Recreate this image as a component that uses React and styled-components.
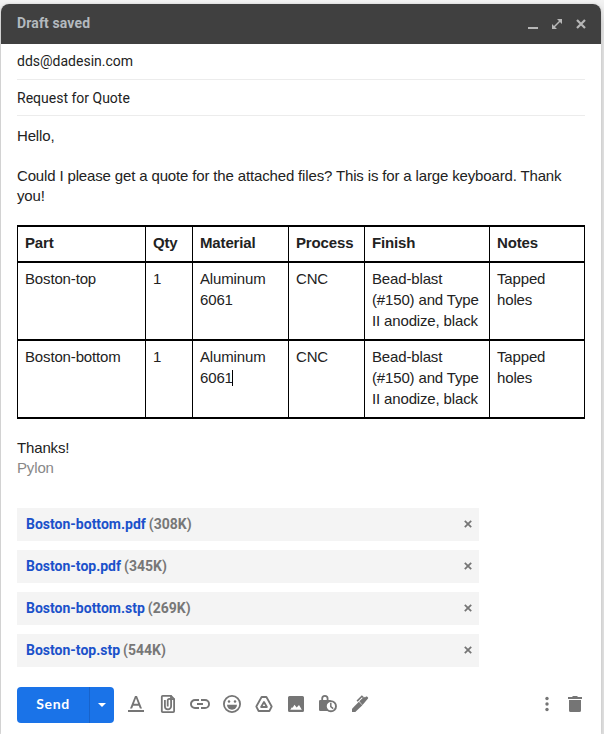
import React from "react";
import styled, { createGlobalStyle } from "styled-components";

const GlobalStyle = createGlobalStyle`
  * { box-sizing: border-box; }
  html, body { margin: 0; padding: 0; }
  body { background: #dedede; overflow: hidden; }
`;

const Backdrop = styled.div`
  width: 604px;
  height: 734px;
  padding: 4px 3px 0 1px;
  background: linear-gradient(#f3f3f3 0, #efefef 5px, #dedede 24px);
`;

const ComposeWindow = styled.main`
  display: flex;
  flex-direction: column;
  height: 730px;
  overflow: hidden;
  background: #fff;
  border-radius: 8px 8px 0 0;
  box-shadow: 0 0 3px rgba(0, 0, 0, 0.15);
  color: #222;
  font-family: Roboto, "Liberation Sans", sans-serif;
  font-size: 14px;
`;

const TitleBar = styled.header`
  display: flex;
  align-items: center;
  flex: 0 0 40px;
  padding: 0 14px 0 16px;
  background: #404040;
  color: #b3b9be;
  font-weight: 700;
  line-height: 20px;
`;

const Title = styled.span`
  flex: 1;
  padding-bottom: 2px;
  letter-spacing: 0.13px;
`;

const WindowControls = styled.div`
  display: flex;
  gap: 12px;
`;

const IconButton = styled.button`
  display: flex;
  align-items: center;
  justify-content: center;
  flex: none;
  width: ${(p) => p.$size}px;
  height: ${(p) => p.$size}px;
  padding: 0;
  border: 0;
  background: none;
  color: ${(p) => p.$color || "#757575"};
`;

const Field = styled.div`
  display: flex;
  align-items: center;
  flex: 0 0 36px;
  margin: 0 16px;
  padding-bottom: ${(p) => p.$lift || 0}px;
  border-bottom: 1px solid #ececec;
`;

const Message = styled.section`
  display: flex;
  flex-direction: column;
  flex: 0 0 392px;
  padding: 10px 16px 0;
  font: 15px/20px "Liberation Sans", Arial, sans-serif;
  letter-spacing: -0.15px;
`;

const Paragraph = styled.p`
  margin: 0 0 20px;
`;

const Signature = styled.span`
  color: #888;
`;

const PartsTable = styled.table`
  width: 568px;
  margin: -1px 0 19px;
  border: solid #000;
  border-width: 2px 0 0 1px;
  border-spacing: 0;
  table-layout: fixed;
  line-height: 21px;
  text-align: left;
`;

const Column = styled.col`
  width: ${(p) => p.$width}px;
`;

const HeadCell = styled.th`
  height: 36px;
  padding: 5px 6px 8px 7px;
  border: solid #000;
  border-width: 0 1px 2px 0;
  font-weight: 700;
  vertical-align: top;
`;

const Cell = styled.td`
  height: 78px;
  padding: 5px 6px 8px 7px;
  border: solid #000;
  border-width: 0 1px 2px 0;
  vertical-align: top;
`;

const Caret = styled.span`
  display: inline-block;
  width: 1px;
  height: 16px;
  margin-left: -1px;
  background: #000;
  vertical-align: -3px;
`;

const Attachments = styled.ul`
  display: flex;
  flex-direction: column;
  gap: 9px;
  width: 462px;
  margin: 0 0 0 16px;
  padding: 0;
  list-style: none;
`;

const Attachment = styled.li`
  display: flex;
  align-items: center;
  height: 33px;
  padding: 0 4px 1px 9px;
  background: #f4f4f4;
  color: #777;
  font-weight: 700;
  line-height: 18px;
`;

const FileName = styled.a`
  margin-right: 3px;
  color: #1b51ca;
`;

const FileSize = styled.span`
  flex: 1;
`;

const Toolbar = styled.footer`
  display: flex;
  align-items: center;
  height: 36px;
  margin: 20px 14px 0 16px;
`;

const SendGroup = styled.div`
  display: flex;
  align-items: center;
  width: 97px;
  height: 36px;
  margin-right: 10px;
  overflow: hidden;
  border-radius: 4px;
  background: #1a73e8;
`;

const SendButton = styled.button`
  width: 73px;
  height: 36px;
  padding: 0 0 2px;
  border: 0;
  border-right: 1px solid #1763cc;
  background: none;
  color: #fff;
  font: 700 14px/20px Lato, sans-serif;
  letter-spacing: 0.6px;
`;

const Tools = styled.div`
  display: flex;
  flex: 1;
  gap: 8px;
  padding-bottom: 2px;
`;

const TrailingTools = styled.div`
  display: flex;
  gap: 4px;
  padding-bottom: 2px;
`;

const columns = [
  ["Part", 128], ["Qty", 47], ["Material", 96],
  ["Process", 76], ["Finish", 125], ["Notes", 95],
];

const parts = ["Boston-top", "Boston-bottom"];

const files = [
  ["Boston-bottom.pdf", "308K"],
  ["Boston-top.pdf", "345K"],
  ["Boston-bottom.stp", "269K"],
  ["Boston-top.stp", "544K"],
];

const Icon = ({ size = 24, box = 24, children }) => (
  <svg width={size} height={size} viewBox={`0 0 ${box} ${box}`} fill="currentColor" aria-hidden="true">
    {children}
  </svg>
);

const CrossIcon = ({ size }) => (
  <Icon size={size} box={10}>
    <path d="M1 1 9 9M9 1 1 9" fill="none" stroke="currentColor" strokeWidth="2.200" />
  </Icon>
);

const tools = [
  ["Formatting options", <path d="M4 18h16v2H4zM11 4 6 16.500H8.100l1.100-2.800h5.600l1.100 2.800H18L13 4zM9.900 11.700 12 6.300l2.100 5.400z" />],
  ["Attach files", <g fill="none" stroke="currentColor" strokeWidth="1.800">
    <path d="M6.700 3.900h8.300L18.100 7v12.200a.9.9 0 0 1-.9.900H6.700a.9.9 0 0 1-.9-.9V4.800c0-.5.400-.9.900-.9z" />
    <path d="M8.900 8v6.200a3.100 3.100 0 0 0 6.200 0V8.500a1.700 1.700 0 0 0-3.400 0V14.500" />
    <path d="M15 3.500V7.200h3.500" />
  </g>],
  ["Insert link", <path d="M3.900 12c0-1.710 1.390-3.100 3.100-3.100h4V7H7a5 5 0 0 0 0 10h4v-1.900H7c-1.710 0-3.100-1.390-3.100-3.100zM9 13h6v-2H9v2zm8-6h-4v1.900h4a3.100 3.100 0 0 1 0 6.200h-4V17h4a5 5 0 0 0 0-10z" />],
  ["Insert emoji", <>
    <circle cx="12" cy="12" r="8.100" fill="none" stroke="currentColor" strokeWidth="1.800" />
    <circle cx="9" cy="9.500" r="1.250" /><circle cx="15" cy="9.500" r="1.250" />
    <path d="M7 12.700h10a5 5 0 0 1-10 0z" />
  </>],
  ["Insert files using Drive", <g fill="none" stroke="currentColor" strokeWidth="1.800" strokeLinejoin="round">
    <path d="M9.600 5h4.800l5.300 9.500-2.300 4.500H6.600l-2.300-4.500z" />
    <path d="m12 10 2.900 5H9.100z" />
  </g>],
  ["Insert photo", <path fillRule="evenodd" d="M5.500 4h13A1.500 1.500 0 0 1 20 5.500v13a1.500 1.500 0 0 1-1.500 1.500h-13A1.500 1.500 0 0 1 4 18.500v-13A1.500 1.500 0 0 1 5.500 4zM6.300 17.800h11.500L15 13l-2.300 2.500-2.300-2.700-1.700 3-.8-.6z" />],
  ["Toggle confidential mode", <>
    <rect x="3" y="8" width="12" height="11" rx="1.300" />
    <path d="M6.200 8.500V6.600a2.700 2.700 0 0 1 5.400 0v1.900" fill="none" stroke="currentColor" strokeWidth="1.800" />
    <circle cx="14.900" cy="14.200" r="5.100" fill="#fff" stroke="currentColor" strokeWidth="1.900" />
    <path d="M14.800 10.800v3.800l2.400 2" fill="none" stroke="currentColor" strokeWidth="1.500" />
  </>],
  ["Insert signature", <>
    <path d="M4 20v-3.300l6.900-6.900 3.500 3.500L7.300 20z" />
    <path d="M11.300 9.200 16 4.700l1 .9 1-1q.500-.4 1 0l1 1q.400.5 0 1l-5.500 6.300z" />
    <path d="m9.100 9.100 4.800-4.800 1.300 1.200" fill="none" stroke="currentColor" strokeWidth="1.600" />
  </>],
];

function ComposeTable() {
  return (
    <PartsTable>
      <colgroup>{columns.map(([name, width]) => <Column key={name} $width={width} />)}</colgroup>
      <thead><tr>{columns.map(([name]) => <HeadCell key={name}>{name}</HeadCell>)}</tr></thead>
      <tbody>
        {parts.map((part, index) => (
          <tr key={part}>
            <Cell>{part}</Cell>
            <Cell>1</Cell>
            <Cell>Aluminum<br />6061{index === 1 && <Caret />}</Cell>
            <Cell>CNC</Cell>
            <Cell>Bead-blast<br />(#150) and Type<br />II anodize, black</Cell>
            <Cell>Tapped<br />holes</Cell>
          </tr>
        ))}
      </tbody>
    </PartsTable>
  );
}

export default function App() {
  return (
    <>
      <GlobalStyle />
      <Backdrop>
        <ComposeWindow>
          <TitleBar>
            <Title>Draft saved</Title>
            <WindowControls>
              <IconButton $size={12} $color="#b7b7b7" aria-label="Minimize"><Icon size={12} box={12}><path d="M1 9h10v2H1z" /></Icon></IconButton>
              <IconButton $size={12} $color="#b7b7b7" aria-label="Full screen"><Icon size={12} box={12}><path d="M6 1h5v5zM1 6v5h5z" /><path d="m3 9 6-6" stroke="currentColor" strokeWidth="1.400" /></Icon></IconButton>
              <IconButton $size={12} $color="#b7b7b7" aria-label="Close"><CrossIcon size={10} /></IconButton>
            </WindowControls>
          </TitleBar>
          <Field $lift={1}>dds@dadesin.com</Field>
          <Field>Request for Quote</Field>
          <Message>
            <Paragraph>Hello,</Paragraph>
            <Paragraph>Could I please get a quote for the attached files? This is for a large keyboard. Thank<br />you!</Paragraph>
            <ComposeTable />
            <span>Thanks!</span>
            <Signature>Pylon</Signature>
          </Message>
          <Attachments>
            {files.map(([name, size]) => (
              <Attachment key={name}>
                <FileName>{name}</FileName>
                <FileSize>({size})</FileSize>
                <IconButton $size={14} aria-label={`Remove ${name}`}><CrossIcon size={8} /></IconButton>
              </Attachment>
            ))}
          </Attachments>
          <Toolbar>
            <SendGroup>
              <SendButton>Send</SendButton>
              <IconButton $size={24} $color="#fff" aria-label="More send options"><Icon size={10} box={10}><path d="M1 3h8L5 7z" /></Icon></IconButton>
            </SendGroup>
            <Tools>
              {tools.map(([label, drawing]) => (
                <IconButton key={label} $size={24} aria-label={label}><Icon>{drawing}</Icon></IconButton>
              ))}
            </Tools>
            <TrailingTools>
              <IconButton $size={24} aria-label="More options"><Icon><circle cx="12" cy="6.500" r="1.700" /><circle cx="12" cy="12" r="1.700" /><circle cx="12" cy="17.500" r="1.700" /></Icon></IconButton>
              <IconButton $size={24} aria-label="Discard draft"><Icon><path d="M5 5h4l1-1h4l1 1h4v2H5zM6 8h12v10.500q0 1.500-1.500 1.500h-9Q6 20 6 18.500z" /></Icon></IconButton>
            </TrailingTools>
          </Toolbar>
        </ComposeWindow>
      </Backdrop>
    </>
  );
}
